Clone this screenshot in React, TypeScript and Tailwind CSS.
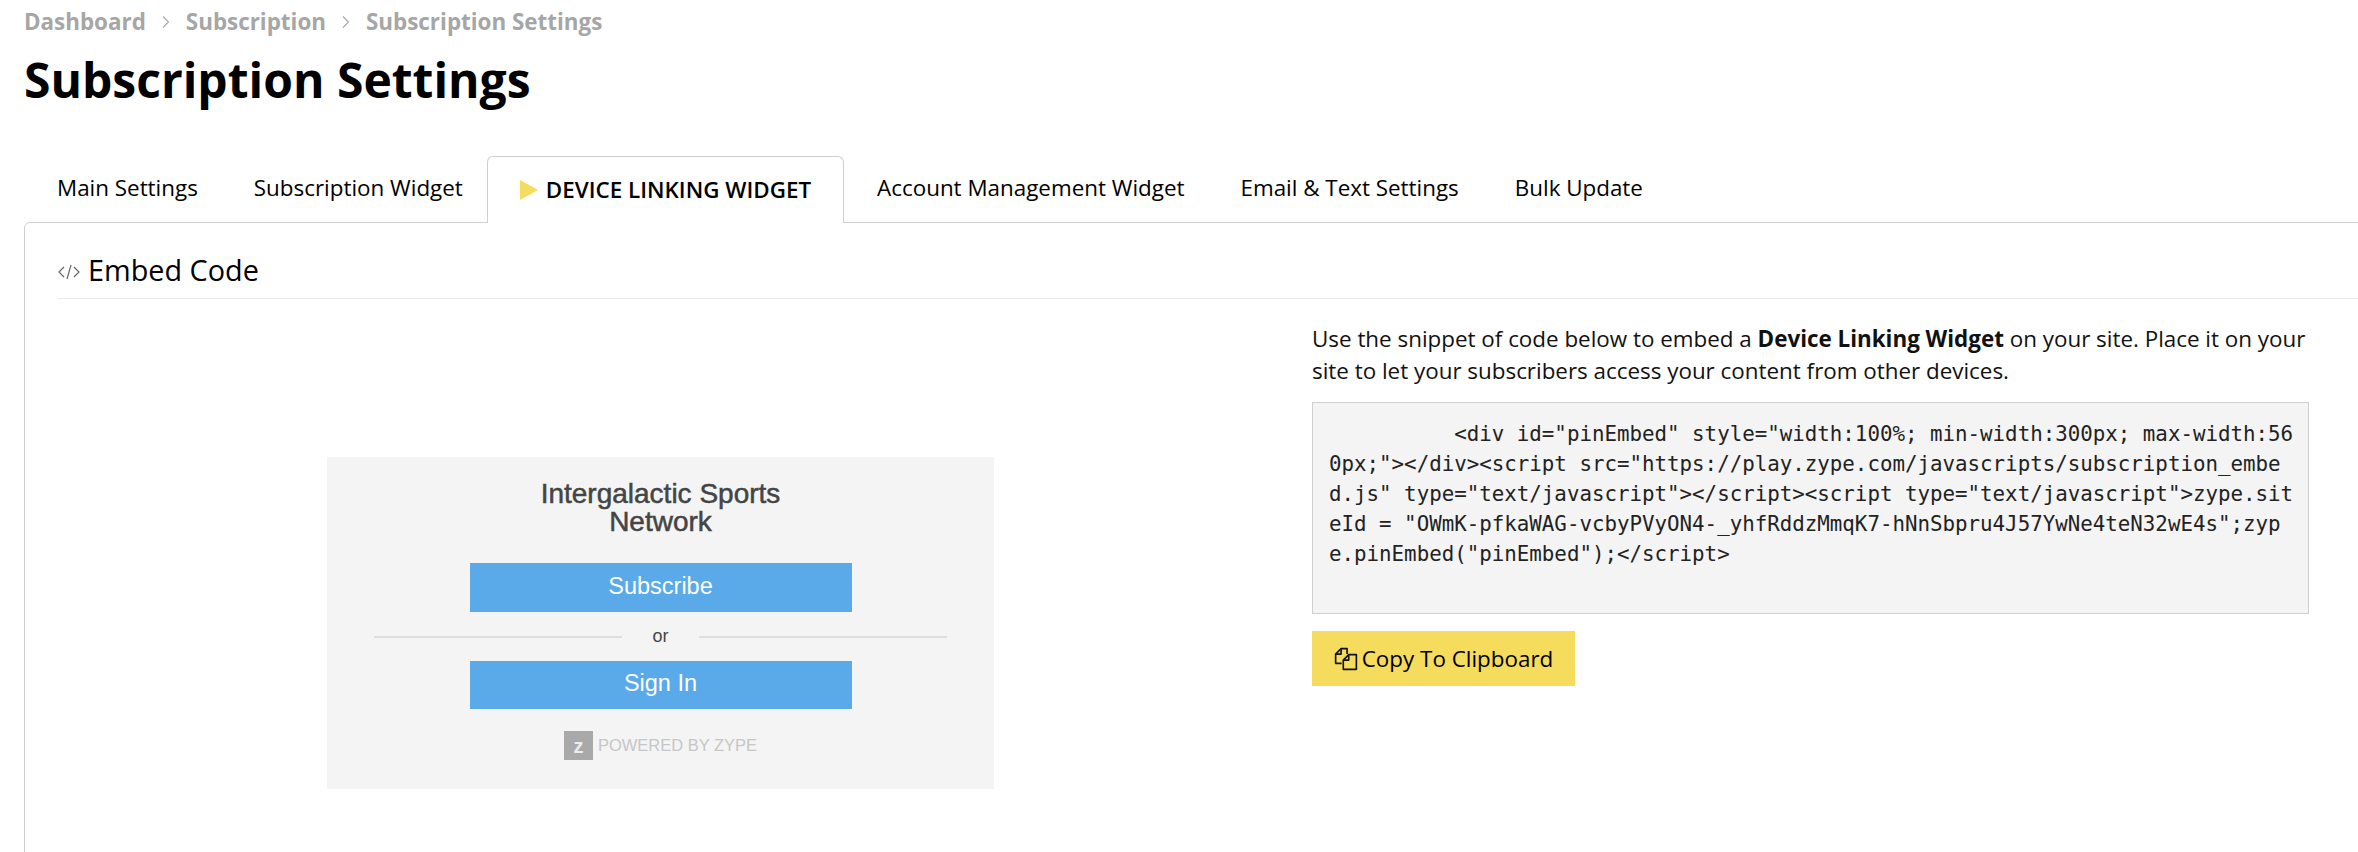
const snippet = `          <div id="pinEmbed" style="width:100%; min-width:300px; max-width:56
0px;"></div><script src="https://play.zype.com/javascripts/subscription_embe
d.js" type="text/javascript"></script><script type="text/javascript">zype.sit
eId = "OWmK-pfkaWAG-vcbyPVyON4-_yhfRddzMmqK7-hNnSbpru4J57YwNe4teN32wE4s";zyp
e.pinEmbed("pinEmbed");</script>`;

function Chevron() {
  return (
    <svg width="10" height="16" viewBox="0 0 10 16" className="mx-[15px]" fill="none" stroke="#a8a8a8" strokeWidth="1.1">
      <path d="M2 2.5l5.5 5.5-5.5 5.5" />
    </svg>
  );
}

function Breadcrumbs() {
  return (
    <div className="flex items-center pl-[24px] h-[44px] text-[22.4px] font-bold text-[#a6a6a6]">
      <span>Dashboard</span>
      <Chevron />
      <span>Subscription</span>
      <Chevron />
      <span>Subscription Settings</span>
    </div>
  );
}

function Tabs() {
  return (
    <div className="flex items-stretch h-[67px] pl-[29px] text-[22.4px] text-black relative z-10">
      <div className="px-7 pb-[3px] flex items-center">Main Settings</div>
      <div className="px-7 pb-[3px] flex items-center">Subscription Widget</div>
      <div className="-ml-1 px-[32px] pb-[1px] flex items-center gap-2 bg-white border border-[#cfcfcf] border-b-0 rounded-t-md h-[67px] font-semibold uppercase">
        <svg width="18" height="20" viewBox="0 0 18 20" className="shrink-0">
          <polygon points="0,0 18,10 0,20" fill="#f5dc5d" />
        </svg>
        <span>Device Linking Widget</span>
      </div>
      <div className="pl-[33px] pr-7 pb-[3px] flex items-center">Account Management Widget</div>
      <div className="px-7 pb-[3px] flex items-center">Email &amp; Text Settings</div>
      <div className="px-7 pb-[3px] flex items-center">Bulk Update</div>
    </div>
  );
}

function Preview() {
  return (
    <div className="w-[667px] h-[332px] bg-[#f4f4f4] flex flex-col items-center font-['Liberation_Sans',sans-serif] text-[#444]">
      <div className="mt-[23px] text-[28px] leading-[28px] text-center w-[300px] [-webkit-text-stroke:0.5px_#444]">Intergalactic Sports Network</div>
      <button className="mt-[27px] w-[382px] h-[49px] bg-[#5aaae9] text-white text-[23.5px] pb-[2px]">Subscribe</button>
      <div className="flex items-center w-[573px] h-[49px] text-[18px]">
        <div className="flex-1 h-[2px] bg-[#dedede]" />
        <span className="w-[77px] text-center">or</span>
        <div className="flex-1 h-[2px] bg-[#dedede]" />
      </div>
      <button className="w-[382px] h-[48px] bg-[#5aaae9] text-white text-[23.5px] pb-[2px]">Sign In</button>
      <div className="mt-[22px] flex items-center gap-[5px]">
        <div className="w-[29px] h-[29px] bg-[#a9a9a9] flex items-center justify-center text-[20px] font-bold text-[#ececec] leading-none">z</div>
        <span className="text-[16.5px] text-[#c6c6c8]">POWERED BY ZYPE</span>
      </div>
    </div>
  );
}

function CopyIcon() {
  return (
    <svg width="24" height="24" viewBox="0 0 22 22" fill="none" stroke="#111" strokeWidth="1.5" strokeLinejoin="round">
      <path d="M7 15H1.5V6.5L6.5 1.5H12V6.5" />
      <path d="M6.5 1.5V6.5H1.5" />
      <path d="M8.5 20.5H20.5V7H13.5L8.5 12Z" />
      <path d="M13.5 7V12H8.5" />
    </svg>
  );
}

export default function App() {
  return (
    <div className="w-[2358px] h-[852px] overflow-hidden bg-white text-black font-['Open_Sans',sans-serif]">
      <Breadcrumbs />
      <h1 className="pl-[24px] text-[48px] leading-[60px] font-bold mt-[6px] mb-[46px]">Subscription Settings</h1>
      <Tabs />
      <div className="-mt-px ml-[24px] w-[2400px] h-[700px] border border-[#cfcfcf] rounded-tl-md pl-[33px] pt-[24px]">
        <div className="flex items-center w-[2300px] h-[52px] border-b border-[#ebebeb] pb-[5px] text-[28.8px]">
          <svg width="22" height="16" viewBox="0 0 22 16" fill="none" stroke="#666" strokeWidth="1.2" className="mr-[8px] mt-[4px]">
            <path d="M6 3L1 8l5 5M16 3l5 5-5 5M13 1L9 15" />
          </svg>
          Embed Code
        </div>
        <div className="flex">
          <div className="w-[1254px] pl-[269px] pt-[158px]">
            <Preview />
          </div>
          <div className="w-[997px] pt-[24px] text-[22.4px] leading-[32px] text-[#111]">
            <p>Use the snippet of code below to embed a <b className="font-bold">Device Linking Widget</b> on your site. Place it on your site to let your subscribers access your content from other devices.</p>
            <pre className="mt-[15px] h-[212px] bg-[#f4f4f4] border border-[#cfcfcf] pt-[16px] pl-[16px] font-['DejaVu_Sans_Mono',monospace] text-[20.8px] leading-[30px] text-[#222] whitespace-pre overflow-hidden">{snippet}</pre>
            <button className="mt-[17px] w-[263px] h-[55px] bg-[#f5dc5d] flex items-center justify-center gap-[4px] text-[22.4px] text-black">
              <CopyIcon />
              Copy To Clipboard
            </button>
          </div>
        </div>
      </div>
    </div>
  );
}
